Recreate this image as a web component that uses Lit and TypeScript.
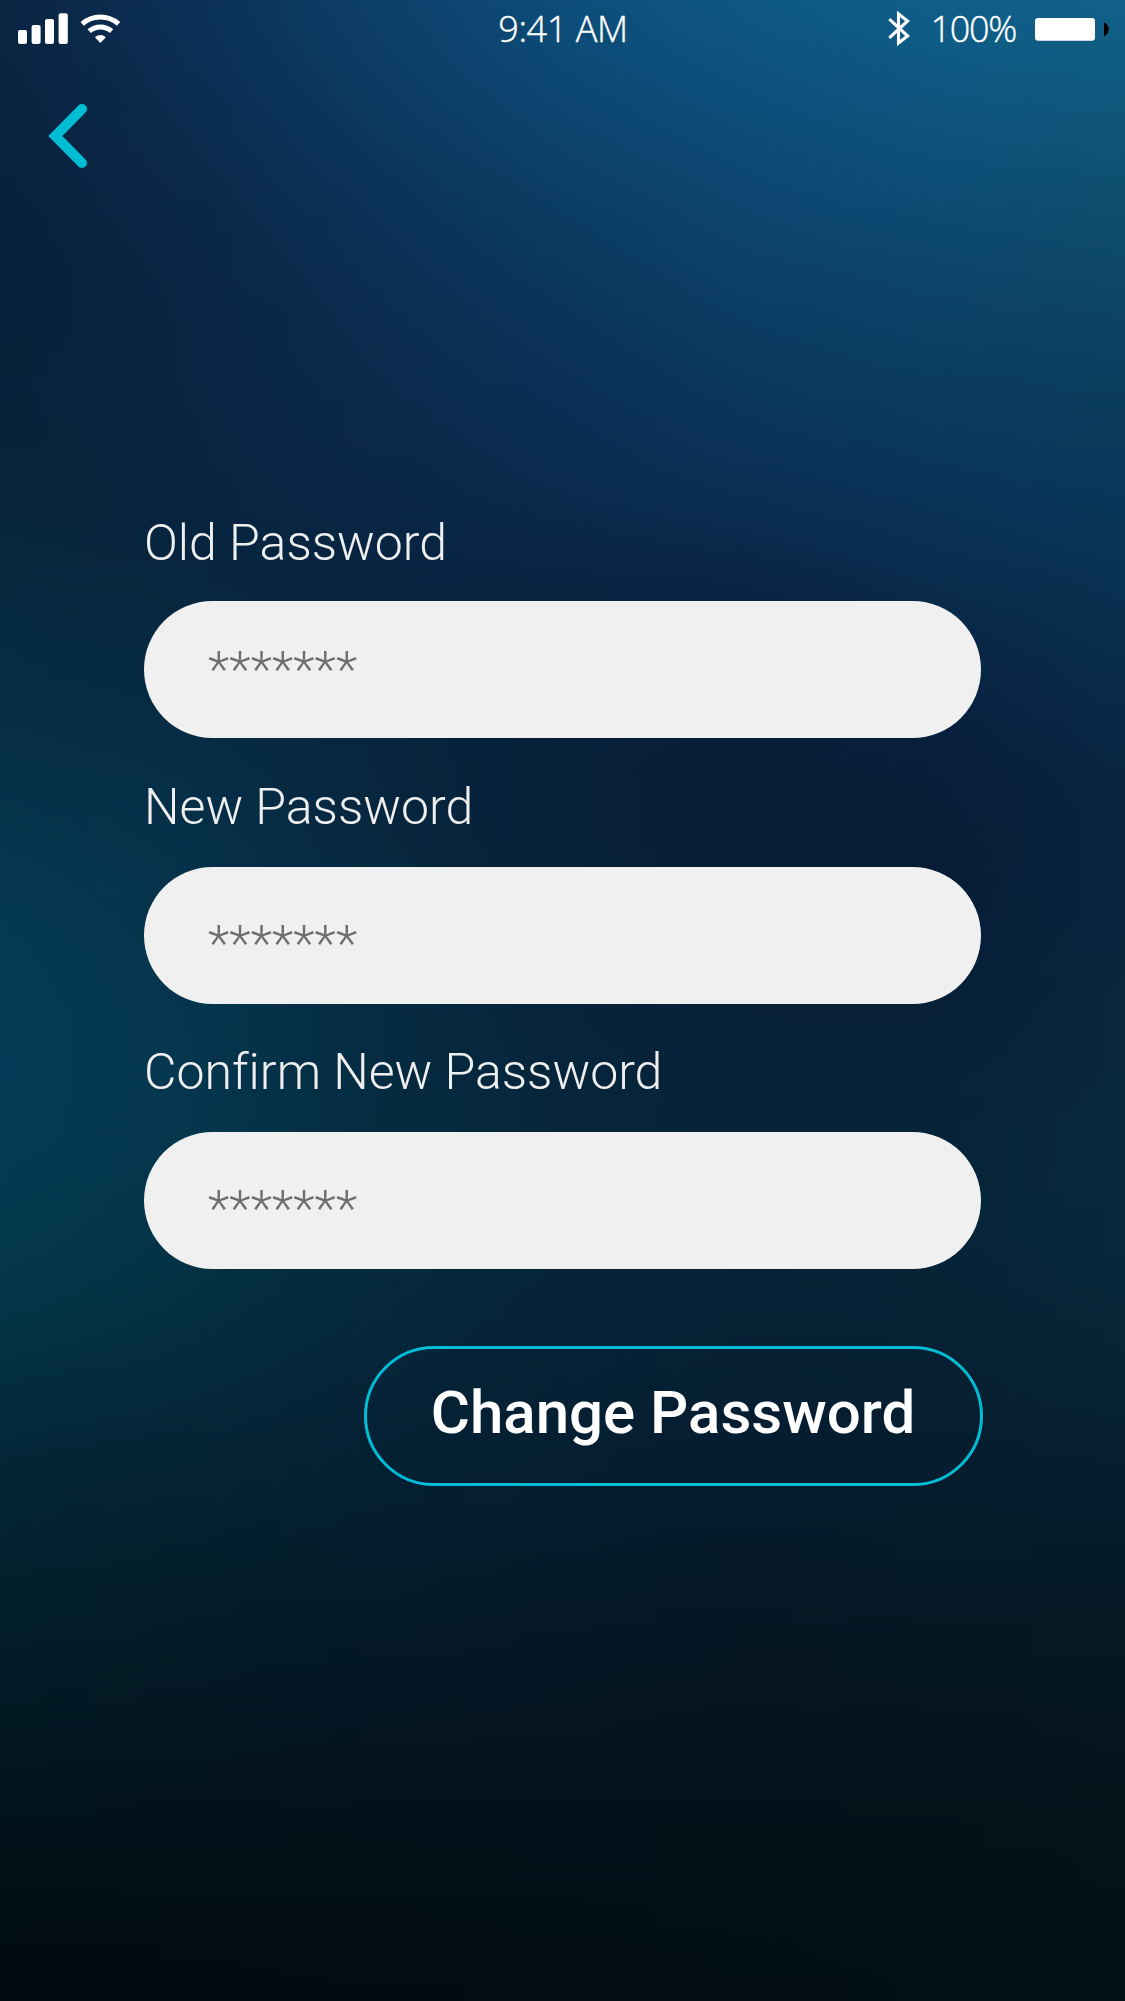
import { LitElement, html, svg, css } from "lit";
import { customElement, property } from "lit/decorators.js";

// Colour mesh of the backdrop: each row is [y, colours at evenly spaced x].
const MESH: [number, string[]][] = [
  [0, ["#0a2542", "#0c3056", "#0d406a", "#0e4e7a", "#0e5885", "#0f5f8c", "#11628a"]],
  [60, ["#092440", "#0b2e52", "#0d3c66", "#0d4a77", "#0e5380", "#0f5a84", "#105c82"]],
  [200, ["#09213d", "#0a2847", "#0c3257", "#0c3d64", "#0d4670", "#0d4c74", "#0f4f6e"]],
  [300, ["#08213b", "#092543", "#0b2d50", "#0b355a", "#0c3e66", "#0c4268", "#0d4565"]],
  [400, ["#08233c", "#082542", "#0b2a4b", "#0b2f54", "#0b365b", "#0b3b5f", "#0b3c5a"]],
  [500, ["#07253a", "#08243f", "#092646", "#0a2b4d", "#0b2f53", "#0a3356", "#09375a"]],
  [600, ["#062a41", "#07273f", "#08233f", "#09213f", "#082241", "#0a2a4b", "#09304f"]],
  [700, ["#062c45", "#072a44", "#07253e", "#08213b", "#081f39", "#092140", "#082a48"]],
  [800, ["#06334a", "#072f48", "#07273f", "#07203a", "#071c36", "#081c37", "#072540"]],
  [900, ["#053a52", "#06334b", "#072940", "#07223b", "#071d37", "#081c36", "#08253f"]],
  [1000, ["#053c56", "#05364e", "#062b42", "#07243c", "#072039", "#072038", "#08273f"]],
  [1100, ["#043c57", "#05374f", "#062c42", "#06263b", "#072339", "#072439", "#08283c"]],
  [1200, ["#053b50", "#053549", "#052b3e", "#06253a", "#062339", "#062539", "#07293c"]],
  [1300, ["#043649", "#043043", "#05293b", "#062438", "#062135", "#062336", "#07273a"]],
  [1400, ["#042c3e", "#04293a", "#052437", "#052034", "#061e32", "#061f31", "#062330"]],
  [1480, ["#032535", "#042334", "#052033", "#061e31", "#051c2e", "#061d2e", "#071c2e"]],
  [1600, ["#02202b", "#031d28", "#041b28", "#041927", "#051825", "#051a26", "#051a26"]],
  [1700, ["#031a25", "#031824", "#041624", "#041522", "#051420", "#04151f", "#051620"]],
  [1800, ["#02141d", "#03131d", "#04121c", "#04121c", "#05121b", "#05121b", "#04141b"]],
  [1900, ["#010f15", "#020f15", "#020f15", "#030f17", "#031017", "#031117", "#041318"]],
  [2001, ["#010a0e", "#020a0e", "#020b10", "#020c12", "#020d14", "#020f15", "#031116"]],
];

@customElement("app-backdrop")
export class AppBackdrop extends LitElement {
  static styles = css`
    :host { display: block; width: 100%; height: 100%; overflow: hidden; }
    .mesh { display: block; width: 100%; height: 100%; }
  `;
  render() {
    return html`<svg class="mesh" viewBox="0 0 1125 2001" preserveAspectRatio="none" aria-hidden="true">
      <defs>
        <linearGradient id="fade" x1="0" y1="0" x2="0" y2="1">
          <stop offset="0" stop-color="#fff" stop-opacity="0"></stop>
          <stop offset="1" stop-color="#fff"></stop>
        </linearGradient>
        <filter id="soft" filterUnits="userSpaceOnUse" x="-100" y="-100" width="1325" height="2201" color-interpolation-filters="sRGB">
          <feGaussianBlur stdDeviation="30"></feGaussianBlur>
        </filter>
        ${MESH.map(([y, colors], i) => {
          const prev = i ? MESH[i - 1][0] : -100;
          return svg`
            <linearGradient id=${"row" + i} gradientUnits="userSpaceOnUse" x1="0" y1="0" x2="1125" y2="0">
              ${colors.map((c, k) => svg`<stop offset=${k / (colors.length - 1)} stop-color=${c}></stop>`)}
            </linearGradient>
            <mask id=${"mask" + i} maskUnits="userSpaceOnUse" x="-100" y="-100" width="1325" height="2201">
              <rect x="-100" y=${prev} width="1325" height=${y - prev} fill="url(#fade)"></rect>
              <rect x="-100" y=${y} width="1325" height=${2101 - y} fill="#fff"></rect>
            </mask>`;
        })}
      </defs>
      <g filter="url(#soft)">
        ${MESH.map((_, i) => svg`<rect x="-100" y="-100" width="1325" height="2201"
          fill=${`url(#row${i})`} mask=${i ? `url(#mask${i})` : "none"}></rect>`)}
      </g>
    </svg>`;
  }
}

@customElement("status-bar")
export class StatusBar extends LitElement {
  static styles = css`
    :host {
      display: grid;
      grid-template-columns: 1fr auto 1fr;
      height: 60px;
      color: #fff;
      font: 300 36px/58px "Open Sans", "Noto Sans", sans-serif;
      -webkit-text-stroke: 0.4px #fff;
    }
    svg { display: block; }
    .side { display: flex; }
    .end { justify-content: flex-end; }
    .text { height: 60px; white-space: pre; }
    .time { padding-left: 1px; letter-spacing: -0.4px; }
    .percent { margin: 0 17px 0 18px; letter-spacing: -1.3px; }
  `;
  render() {
    return html`
      <div class="side">
        <svg width="130" height="60" viewBox="0 0 130 60" fill="#fff">
          <rect x="18" y="30" width="9" height="14" rx="2"></rect>
          <rect x="31.6" y="25" width="9" height="19" rx="2"></rect>
          <rect x="45" y="19" width="9" height="25" rx="2"></rect>
          <rect x="58.6" y="13.2" width="9.2" height="30.8" rx="2"></rect>
          <path d="M82.2 23.8A27.5 27.5 0 0 1 118.6 23.8M89.2 31.2A17 17 0 0 1 111.6 31.2" fill="none" stroke="#fff" stroke-width="5"></path>
          <path d="M94.9 37.2Q100.4 33 105.9 37.2L100.4 43Z"></path>
        </svg>
      </div>
      <div class="text time">9:41 AM</div>
      <div class="side end">
        <svg width="26" height="60" viewBox="887 0 26 60">
          <path d="M890.3 19.2L908.6 36 899.5 43V14L908.6 21 890.3 37.8" fill="none" stroke="#fff" stroke-width="3.1"></path>
        </svg>
        <div class="text percent">100%</div>
        <svg width="92" height="60" viewBox="1033 0 92 60">
          <rect x="1035" y="18" width="60" height="22.8" rx="3" fill="#fff"></rect>
          <path d="M1104 22.6Q1108.8 24.6 1108.8 29.3T1104 36.2Z" fill="#000"></path>
        </svg>
      </div>`;
  }
}

@customElement("password-field")
export class PasswordField extends LitElement {
  @property() label = "";
  @property() value = "";
  static styles = css`
    :host { display: block; }
    .label {
      display: block;
      height: 60px;
      margin-bottom: var(--label-gap, 30px);
      color: #efefef;
      font: 300 50px/60px Roboto, sans-serif;
      font-variant-ligatures: none;
      white-space: pre;
    }
    .box {
      display: block;
      box-sizing: border-box;
      width: 100%;
      height: 137px;
      margin: 0;
      padding: var(--field-top, 16px) 64px 0;
      border: 0;
      border-radius: 69px;
      outline: 0;
      background: #f0f0f0;
      color: #6d6e71;
      font: 300 50px/60px Roboto, sans-serif;
      letter-spacing: 0.1px;
    }
  `;
  render() {
    return html`<label class="label" for="box">${this.label}</label>
      <input class="box" id="box" type="text" .value=${this.value} />`;
  }
}

@customElement("app-root")
export class AppRoot extends LitElement {
  static styles = css`
    :host { display: block; width: 1125px; height: 2001px; }
    .screen { display: grid; width: 1125px; height: 2001px; overflow: hidden; }
    .backdrop, .content { grid-area: 1 / 1; min-height: 0; }
    .content { z-index: 1; display: flex; flex-direction: column; }
    .back {
      width: 60px;
      height: 80px;
      margin: 36px 0 0 40px;
      padding: 0;
      border: 0;
      background: none;
    }
    .back svg { display: block; }
    .form {
      display: flex;
      flex-direction: column;
      gap: 38px;
      width: 837px;
      margin: 337px 0 0 144px;
    }
    .first { --field-top: 0px; --label-gap: 28px; margin-bottom: 1px; }
    .submit {
      align-self: flex-end;
      box-sizing: border-box;
      width: 619px;
      height: 140px;
      margin: 39px -1.5px 0 0;
      padding: 0 0 6px;
      border: 3px solid #00bcd4;
      border-radius: 70px;
      background: none;
      color: #fff;
      font: 500 60px/70px Roboto, sans-serif;
      white-space: pre;
    }
  `;
  render() {
    return html`<div class="screen">
      <app-backdrop class="backdrop"></app-backdrop>
      <main class="content">
        <status-bar></status-bar>
        <button class="back" aria-label="Back">
          <svg width="60" height="80" viewBox="40 96 60 80">
            <path d="M82 109L55.3 136 82 163" fill="none" stroke="#00bcd4" stroke-width="10" stroke-linecap="round" stroke-linejoin="miter"></path>
          </svg>
        </button>
        <div class="form">
          <password-field class="first" label="Old Password" value="*******"></password-field>
          <password-field label="New Password" value="*******"></password-field>
          <password-field label="Confirm New Password" value="*******"></password-field>
          <button class="submit">Change Password</button>
        </div>
      </main>
    </div>`;
  }
}
